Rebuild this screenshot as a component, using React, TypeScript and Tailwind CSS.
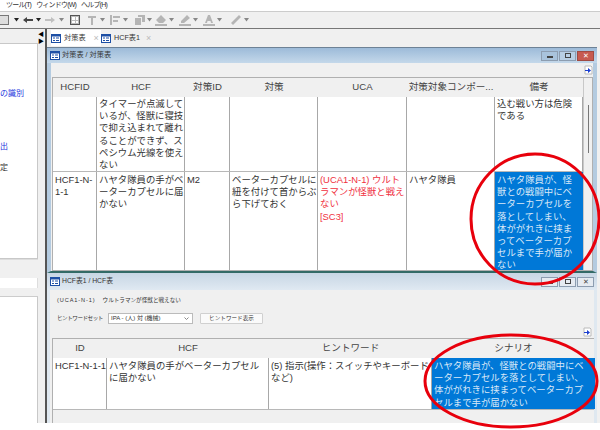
const Drop = ({ c = "#888" }: { c?: string }) => (
  <svg width="5" height="4" viewBox="0 0 5 4" className="shrink-0">
    <path d="M0 0h5L2.500 3.500z" fill={c} />
  </svg>
);

const ToolIcon = ({ d, c = "#b5b5b5" }: { d: string; c?: string }) => (
  <svg width="12" height="12" viewBox="0 0 12 12" className="shrink-0">
    <path d={d} fill={c} />
  </svg>
);

const DocIcon = ({ bar = true }: { bar?: boolean }) => (
  <svg width="10" height="9" viewBox="0 0 10 9" className="shrink-0">
    <rect x="0.500" y="0.500" width="9" height="8" fill="#fff" stroke="#1d4fa5" />
    {bar && <rect x="0" y="0" width="10" height="2.500" fill="#1d4fa5" />}
    <path d="M2 4h2M5 4h3M2 6.500h2M5 6.500h3" stroke="#1d4fa5" />
  </svg>
);

const WinBtns = ({ active }: { active?: boolean }) => (
  <div className="flex gap-px h-[10px]">
    <div className={`w-[17px] border border-[#8d9db0] flex items-center justify-center ${active ? "bg-[#a9c3dc]" : "bg-[#e6ebf1]"}`}>
      <div className="w-[6px] h-[2px] bg-[#444] mt-[3px]" />
    </div>
    <div className={`w-[17px] border border-[#8d9db0] flex items-center justify-center ${active ? "bg-[#b9cfe4]" : "bg-[#e6ebf1]"}`}>
      <div className="w-[6px] h-[5px] border border-[#444]" />
    </div>
    <div className={`w-[17px] border flex items-center justify-center text-[7px] leading-none ${active ? "bg-[#c75a50] border-[#a04a42] text-white" : "bg-[#e6ebf1] border-[#8d9db0] text-[#444]"}`}>
      ✕
    </div>
  </div>
);

const Arrow = () => (
  <svg width="9" height="10" viewBox="0 0 9 10">
    <path d="M1 1h6l1 1v7H1z" fill="#fff" stroke="#bbb" />
    <path d="M1 5h3V3l3 2.500L4 8V6H1z" fill="#1c3fd0" />
  </svg>
);

const Cell = ({ children, className = "" }: { children?: React.ReactNode; className?: string }) => (
  <div className={`bg-white border-r border-[#a8a8a8] pl-[2px] whitespace-pre overflow-hidden ${className}`}>{children}</div>
);

const upperCols = "grid grid-cols-[44px_88px_45px_88px_89px_88px_88px]";
const lowerCols = "grid grid-cols-[54px_162px_163px_163px]";

export default function App() {
  return (
    <div className="relative w-[600px] h-[430px] overflow-hidden bg-white text-[#333] text-[9.4px] leading-[12.2px] font-['Liberation_Sans','Noto_Sans_CJK_JP',sans-serif]">
      <div className="h-[12px] pl-[6px] flex gap-[5px] items-center text-[7px] tracking-[-0.8px] border-b border-[#ccc] bg-white">
        <span>ツール(T)</span>
        <span>ウィンドウ(W)</span>
        <span>ヘルプ(H)</span>
      </div>
      <div className="h-[17px] bg-[#f0f0f0] border-b border-[#777] flex items-center">
        <div className="w-[10px] h-[10px] border border-[#777] bg-[#ddd] -ml-[1px] mr-[5px] shrink-0" />
        <Drop c="#222" />
        <div className="w-[3px]" />
        <ToolIcon c="#444" d="M1 6l4-3v2h6v2H5v2z" />
        <div className="w-[2px]" />
        <Drop c="#222" />
        <div className="w-[3px]" />
        <ToolIcon c="#c0c0c0" d="M11 6L7 3v2H1v2h6v2z" />
        <div className="w-[3px]" />
        <Drop c="#888" />
        <div className="w-[6px]" />
        <div className="w-[10px] h-[10px] border border-[#555] bg-[#bbb] grid grid-cols-2 gap-px p-px shrink-0">
          <div className="bg-white" />
          <div className="bg-white" />
          <div className="bg-white" />
          <div className="bg-white" />
        </div>
        <div className="w-[6px]" />
        <ToolIcon d="M2 2h8v2H7v7H5V4H2z" />
        <div className="w-[2px]" />
        <Drop />
        <div className="w-[4px]" />
        <ToolIcon d="M1 1h2v10H1zM4 2h7v2H4zM4 6h5v2H4z" />
        <div className="w-[2px]" />
        <Drop />
        <div className="w-[6px]" />
        <ToolIcon d="M1 4h6v7H1zM4 1h7v7H8V3H4z" />
        <div className="w-[1px]" />
        <Drop />
        <div className="w-[3px]" />
        <ToolIcon d="M6 1l5 5-3 3H4L1 6zM0 10h12v2H0z" />
        <div className="w-[2px]" />
        <Drop />
        <div className="w-[5px]" />
        <ToolIcon d="M8 1l3 3-6 5H2V7zM0 10h12v2H0z" />
        <div className="w-[2px]" />
        <Drop />
        <div className="w-[5px]" />
        <ToolIcon d="M5 1h2l3 8H8L7.500 7h-3L4 9H2zM0 10h12v2H0z" />
        <div className="w-[2px]" />
        <Drop />
        <div className="w-[8px]" />
        <ToolIcon d="M9 1l2 2-8 8-2-2z" />
        <div className="w-[2px]" />
        <Drop />
      </div>
      <div className="h-[394px] flex">
        <div className="w-[38px] shrink-0 flex flex-col bg-[#f0f0f0]">
          <div className="h-[14px] shrink-0" />
          <div className="h-[216px] shrink-0 bg-white border-r border-y border-[#c8c8c8] overflow-hidden text-[8px] flex flex-col items-start">
            <span className="mt-[44px] text-[#2233dd] whitespace-nowrap">の識別</span>
            <span className="mt-[41px] text-[#2233dd]">出</span>
            <span className="mt-[9px] text-[#333]">定</span>
          </div>
          <div className="h-[19px] shrink-0 border-t border-[#ddd]" />
          <div className="h-[10px] shrink-0 bg-white border-r border-[#ddd]" />
          <div className="h-[9px] shrink-0 border-b border-[#ccc]" />
          <div className="flex-1 bg-white border-r border-[#c8c8c8]" />
        </div>
        <div className="w-[9px] shrink-0 bg-[#f0f0f0] border-r-2 border-[#555] flex flex-col items-end pr-[1px] pt-[2px] text-[6px] leading-[7px] text-black">
          <span>◀</span>
          <span>▶</span>
        </div>
        <div className="flex-1 flex flex-col bg-[#f0f0f0] min-w-0">
          <div className="h-[18px] flex items-center pl-[4px] shrink-0 text-[7.200px]">
            <div className="flex items-center w-[50px] gap-[3px] bg-white h-[16px]">
              <DocIcon />
              <span>対策表</span>
              <span className="text-[#bbb] ml-[5px] text-[9px]">×</span>
            </div>
            <div className="flex items-center gap-[3px] h-[16px]">
              <DocIcon />
              <span>HCF表1</span>
              <span className="text-[#bbb] ml-[3px] text-[9px]">×</span>
            </div>
          </div>
          <div className="h-[226px] w-[550px] shrink-0 flex flex-col bg-[#f0f0f0] border-t border-[#6e8296]">
            <div className="h-[15px] shrink-0 bg-gradient-to-b from-[#9dbbd9] to-[#c4d8ea] flex items-center justify-between pl-[3px] pr-[3px] text-[7.200px]">
              <div className="flex items-center gap-[2px]">
                <DocIcon />
                <span>対策表 / 対策表</span>
              </div>
              <WinBtns active />
            </div>
            <div className="flex-1 flex border-x-[4px] border-[#b4cbe0] border-b-2 border-b-[#336a66] min-h-0">
              <div className="flex-1 flex flex-col pl-[1px] min-w-0">
                <div className="h-[14px] shrink-0 flex justify-end items-center">
                  <Arrow />
                </div>
                <div className="flex-1 flex border border-[#b0b0b0] min-h-0">
                  <div className="w-[530px] shrink-0 flex flex-col">
                    <div className={`${upperCols} h-[19px] shrink-0 items-center text-center text-[#444] bg-[#f0f0f0] text-[9.600px] whitespace-nowrap`}>
                      <span>HCFID</span>
                      <span>HCF</span>
                      <span>対策ID</span>
                      <span>対策</span>
                      <span>UCA</span>
                      <span className="overflow-hidden">対策対象コンポー...</span>
                      <span>備考</span>
                    </div>
                    <div className={`${upperCols} h-[75px] shrink-0 border-b border-[#b8b8b8]`}>
                      <Cell />
                      <Cell className="pt-[1px]">{"タイマーが点滅して\nいるが、怪獣に寝技\nで抑え込まれて離れ\nることができず、ス\nペシウム光線を使え\nない"}</Cell>
                      <Cell />
                      <Cell />
                      <Cell />
                      <Cell />
                      <Cell className="pt-[1px]">{"込む戦い方は危険\nである"}</Cell>
                    </div>
                    <div className={`${upperCols} flex-1 min-h-0`}>
                      <Cell className="pt-[2px]">{"HCF1-N-\n1-1"}</Cell>
                      <Cell className="pt-[2px]">{"ハヤタ隊員の手がベ\nーターカプセルに届\nかない"}</Cell>
                      <Cell className="pt-[2px]">M2</Cell>
                      <Cell className="pt-[2px]">{"ベーターカプセルに\n紐を付けて首からぶ\nら下げておく"}</Cell>
                      <Cell className="pt-[2px] text-[#f03040]">{"(UCA1-N-1) ウルト\nラマンが怪獣と戦え\nない\n[SC3]"}</Cell>
                      <Cell className="pt-[2px]">ハヤタ隊員</Cell>
                      <div className="bg-[#0078d7] text-[#dbe9f7] pl-[2px] pt-[2px] whitespace-pre overflow-hidden">
                        {"ハヤタ隊員が、怪\n獣との戦闘中にベ\nーターカプセルを\n落としてしまい、\n体ががれきに挟ま\nってベーターカプ\nセルまで手が届か\nない"}
                      </div>
                    </div>
                  </div>
                  <div className="flex-1 bg-[#f0f0f0] border-l border-[#c8c8c8] relative">
                    <div className="absolute left-[4px] top-[27px] w-[1px] h-[48px] bg-[#777]" />
                  </div>
                </div>
              </div>
            </div>
          </div>
          <div className="h-[150px] w-[550px] shrink-0 flex flex-col bg-[#f0f0f0]">
            <div className="h-[17px] shrink-0 bg-gradient-to-b from-[#c7d6e4] to-[#e0e9f2] flex items-center justify-between pl-[3px] pr-[3px] text-[6.800px]">
              <div className="flex items-center gap-[2px]">
                <DocIcon />
                <span>HCF表1 / HCF表</span>
              </div>
              <WinBtns />
            </div>
            <div className="flex-1 flex flex-col border-x-[3px] border-[#dfe8f0] pl-[2px] min-h-0">
              <div className="h-[35px] shrink-0 flex flex-col pl-[5px] text-[5.600px] text-[#333]">
                <div className="h-[19px] flex items-center pt-[2px] gap-[7px]">
                  <span className="tracking-[0.9px]">(UCA1-N-1)</span>
                  <span>ウルトラマンが怪獣と戦えない</span>
                </div>
                <div className="h-[14px] flex items-center gap-[5px] mt-[2px]">
                  <span className="tracking-[-0.5px] w-[46px] whitespace-nowrap">ヒントワードセット</span>
                  <div className="w-[85px] h-[11px] bg-white border border-[#bbb] flex items-center justify-between pl-[2px] pr-[3px] text-[6px]">
                    <span className="whitespace-nowrap">IPA - (人) 対 (機械)</span>
                    <svg width="5" height="3" viewBox="0 0 5 3">
                      <path d="M0.500 0.500L2.500 2.500L4.500 0.500" stroke="#888" fill="none" />
                    </svg>
                  </div>
                  <div className="w-[63px] h-[11px] ml-[2px] bg-[#fafafa] border border-[#d0d0d0] rounded-[1px] flex items-center justify-center whitespace-nowrap">ヒントワード表示</div>
                </div>
              </div>
              <div className="h-[13px] shrink-0 flex justify-end items-center pr-[2px]">
                <Arrow />
              </div>
              <div className="flex-1 border-t border-l border-[#b0b0b0] min-h-0 w-[542px]">
                <div className={`${lowerCols} h-[19px] items-center text-center text-[#444] text-[9.600px]`}>
                  <span>ID</span>
                  <span>HCF</span>
                  <span>ヒントワード</span>
                  <span>シナリオ</span>
                </div>
                <div className={`${lowerCols} h-[52px] border-b border-[#b8b8b8]`}>
                  <Cell className="pt-[2px]">HCF1-N-1-1</Cell>
                  <Cell className="pt-[2px]">{"ハヤタ隊員の手がベーターカプセル\nに届かない"}</Cell>
                  <Cell className="pt-[2px]">{"(5) 指示(操作：スイッチやキーボード\nなど)"}</Cell>
                  <div className="bg-[#0078d7] text-[#dbe9f7] pl-[2px] pt-[2px] whitespace-pre overflow-hidden">
                    {"ハヤタ隊員が、怪獣との戦闘中にベ\nーターカプセルを落としてしまい、\n体ががれきに挟まってベーターカプ\nセルまで手が届かない"}
                  </div>
                </div>
              </div>
            </div>
          </div>
        </div>
      </div>
      <svg className="absolute left-0 top-0 pointer-events-none" width="600" height="430" viewBox="0 0 600 430" fill="none">
        <ellipse cx="535" cy="219" rx="64" ry="65" stroke="#e8000c" strokeWidth="3" />
        <ellipse cx="511" cy="381" rx="86" ry="46" stroke="#e8000c" strokeWidth="3" />
      </svg>
    </div>
  );
}
